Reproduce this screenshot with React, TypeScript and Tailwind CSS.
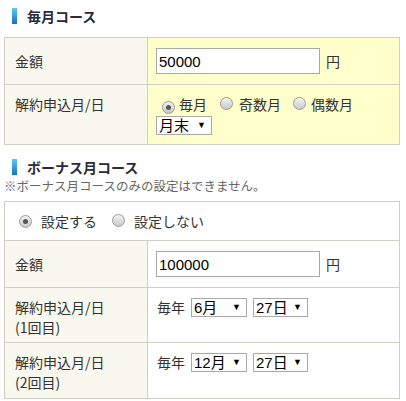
import React from 'react';

const jp = "font-['Noto_Sans_CJK_JP',sans-serif]";
const num = "font-['Liberation_Sans','Noto_Sans_CJK_JP',sans-serif]";

const Radio = ({ checked = false }: { checked?: boolean }) => (
    <span className="inline-flex items-center justify-center w-[13px] h-[13px] rounded-full border border-[#9a9a9a] bg-gradient-to-b from-[#f4f4f4] to-[#c9c9c9] shrink-0">
        {checked && <span className="block w-[5px] h-[5px] rounded-full bg-[#555]"></span>}
    </span>
);

const Select = ({ label, width }: { label: string; width: string }) => (
    <span className={`inline-flex items-center justify-between h-[19px] border border-[#a9a9a9] bg-white pl-[2px] pr-[5px] text-[15px] text-black ${num} ${width}`}>
        <span className="leading-none">{label}</span>
        <span className="text-[9px] leading-none">▼</span>
    </span>
);

const Heading = ({ children }: { children: React.ReactNode }) => (
    <div className="flex items-center gap-[10px] pl-[12px] h-[16px]">
        <span className="block w-[5px] h-[16px] bg-gradient-to-b from-[#5fc8f5] to-[#0a74bf]"></span>
        <span className="text-[14px] font-bold text-[#2a2a3a] leading-none">{children}</span>
    </div>
);

const Label = ({ children, top = false }: { children: React.ReactNode; top?: boolean }) => (
    <div className={`w-[143px] shrink-0 border-r border-[#cfcfc4] bg-[#f8f8ef] px-[10px] text-[14px] leading-[20px] text-[#333] flex ${top ? 'items-start pt-[9px]' : 'items-center'}`}>
        <div>{children}</div>
    </div>
);

const Amount = ({ value }: { value: string }) => (
    <div className="flex items-center gap-[6px]">
        <input
            readOnly
            defaultValue={value}
            className={`w-[164px] h-[26px] border border-[#a9a9a9] bg-white px-[2px] text-[15px] text-black outline-none ${num}`}
        />
        <span className="text-[14px] text-[#333]">円</span>
    </div>
);

export default function App() {
    return (
        <div className={`w-[406px] h-[401px] bg-white ${jp}`}>
            {/* 毎月コース */}
            <div className="pt-[8px]">
                <Heading>毎月コース</Heading>
            </div>
            <div className="ml-[4px] mt-[13px] w-[396px] border border-[#cfcfc4]">
                <div className="flex h-[46px]">
                    <Label>金額</Label>
                    <div className="flex-1 bg-[#ffffcc] pl-[8px] flex items-center">
                        <Amount value="50000" />
                    </div>
                </div>
                <div className="flex h-[60px] border-t border-[#cfcfc4]">
                    <Label top>解約申込月/日</Label>
                    <div className="flex-1 bg-[#ffffcc] pl-[8px] pt-[9px] text-[14px] leading-[20px] text-[#333]">
                        <div className="flex items-center">
                            <span className="ml-[6px] mr-[4px]"><Radio checked /></span>
                            <span>毎月</span>
                            <span className="ml-[13px] mr-[6px]"><Radio /></span>
                            <span>奇数月</span>
                            <span className="ml-[12px] mr-[5px]"><Radio /></span>
                            <span>偶数月</span>
                        </div>
                        <div className="mt-[1px]">
                            <Select label="月末" width="w-[56px]" />
                        </div>
                    </div>
                </div>
            </div>

            {/* ボーナス月コース */}
            <div className="mt-[14px]">
                <Heading>ボーナス月コース</Heading>
            </div>
            <div className="pl-[4px] mt-[3px] text-[12.5px] leading-[16px] text-[#666]">
                ※ボーナス月コースのみの設定はできません。
            </div>
            <div className="ml-[4px] mt-[7px] w-[396px] border border-[#cfcfc4] text-[#333]">
                <div className="flex items-center h-[38px] text-[14px] pl-[14px]">
                    <Radio checked />
                    <span className="ml-[9px]">設定する</span>
                    <span className="ml-[15px]"><Radio /></span>
                    <span className="ml-[9px]">設定しない</span>
                </div>
                <div className="flex h-[47px] border-t border-[#cfcfc4]">
                    <Label>金額</Label>
                    <div className="flex-1 bg-white pl-[8px] flex items-center">
                        <Amount value="100000" />
                    </div>
                </div>
                <div className="flex h-[55px] border-t border-[#cfcfc4]">
                    <Label top>解約申込月/日<br />(1回目)</Label>
                    <div className="flex-1 bg-white pl-[9px] pt-[9px] flex items-center self-start gap-[6px] text-[14px] leading-[20px]">
                        <span>毎年</span>
                        <Select label="6月" width="w-[56px]" />
                        <Select label="27日" width="w-[55px]" />
                    </div>
                </div>
                <div className="flex h-[56px] border-t border-[#cfcfc4]">
                    <Label top>解約申込月/日<br />(2回目)</Label>
                    <div className="flex-1 bg-white pl-[9px] pt-[9px] flex items-center self-start gap-[6px] text-[14px] leading-[20px]">
                        <span>毎年</span>
                        <Select label="12月" width="w-[56px]" />
                        <Select label="27日" width="w-[55px]" />
                    </div>
                </div>
            </div>
        </div>
    );
}
